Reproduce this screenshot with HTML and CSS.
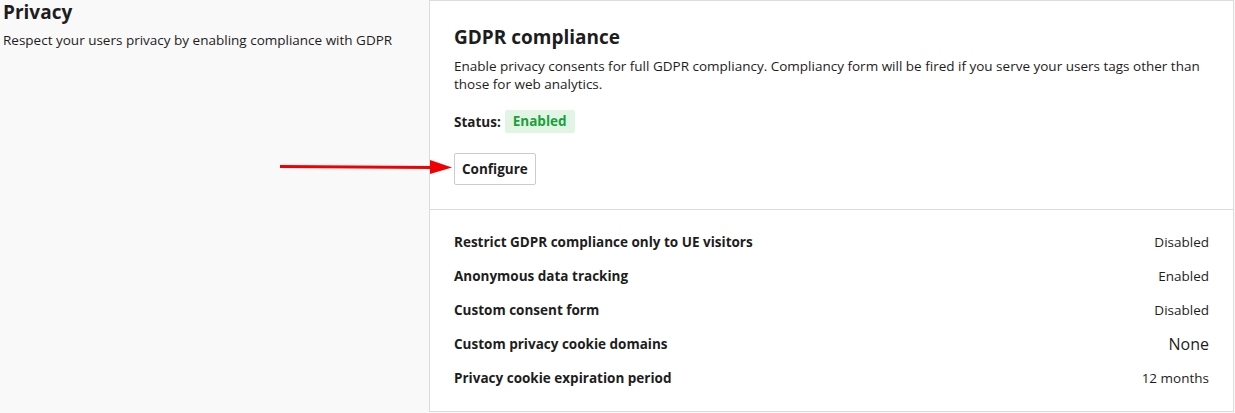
FILE: index.html
```html
<!DOCTYPE html>
<html lang="en">
<head>
<meta charset="utf-8">
<title>Privacy</title>
<link rel="stylesheet" href="styles.css">
</head>
<body>
<div class="page">
  <aside class="intro">
    <h2 class="intro-title">Privacy</h2>
    <p class="intro-text">Respect your users privacy by enabling compliance with GDPR</p>
    <div class="arrow-row">
      <svg class="arrow" width="172" height="16" viewBox="0 0 172 16">
        <line x1="0" y1="7.5" x2="152" y2="8.5" stroke="#f00000" stroke-width="3"/>
        <polygon points="150,1 172,8.5 150,15" fill="#f00000"/>
      </svg>
    </div>
  </aside>
  <section class="card">
    <div class="card-head">
      <h3 class="card-title">GDPR compliance</h3>
      <p class="card-desc">Enable privacy consents for full GDPR compliancy. Compliancy form will be fired if you serve your users tags other than those for web analytics.</p>
      <div class="status">
        <span class="status-label">Status:</span>
        <span class="badge">Enabled</span>
      </div>
      <button class="btn">Configure</button>
    </div>
    <div class="card-body">
      <div class="row"><span class="row-label">Restrict GDPR compliance only to UE visitors</span><span class="row-value">Disabled</span></div>
      <div class="row"><span class="row-label">Anonymous data tracking</span><span class="row-value">Enabled</span></div>
      <div class="row"><span class="row-label">Custom consent form</span><span class="row-value">Disabled</span></div>
      <div class="row"><span class="row-label">Custom privacy cookie domains</span><span class="row-value row-value-lg">None</span></div>
      <div class="row"><span class="row-label">Privacy cookie expiration period</span><span class="row-value">12 months</span></div>
    </div>
  </section>
</div>
</body>
</html>
```
FILE: styles.css
```css
* { box-sizing: border-box; }
html, body {
  margin: 0;
  background: #f9f9f9;
  font-family: "Open Sans", "Noto Sans", sans-serif;
  color: #1d1d1d;
}
.page {
  display: flex;
  align-items: flex-start;
}
.intro {
  width: 429px;
  padding-left: 3px;
  flex: none;
  position: relative;
}
.intro-title {
  margin: 0;
  font-size: 19px;
  line-height: 24px;
  font-weight: 700;
}
.intro-text {
  margin: 6px 0 0;
  font-size: 13.5px;
  line-height: 20px;
}
.arrow-row {
  position: absolute;
  left: 280px;
  top: 159px;
}
.arrow { display: block; }
.card {
  width: 805px;
  flex: none;
  background: #fff;
  border: 1px solid #dcdcdc;
}
.card-head {
  padding: 24px 24px 24px;
  border-bottom: 1px solid #dcdcdc;
}
.card-title {
  margin: 0;
  font-size: 19px;
  line-height: 24px;
  font-weight: 700;
}
.card-desc {
  margin: 8px 0 0;
  font-size: 13.5px;
  line-height: 18px;
}
.status {
  display: flex;
  align-items: center;
  gap: 4px;
  margin-top: 17px;
}
.status-label {
  font-size: 13.5px;
  font-weight: 700;
}
.badge {
  background: #e2f5e5;
  color: #17a03b;
  font-weight: 700;
  font-size: 13.5px;
  line-height: 23px;
  padding: 0 8px;
  border-radius: 2px;
}
.btn {
  margin-top: 20px;
  display: block;
  font-family: inherit;
  font-size: 13.5px;
  font-weight: 700;
  color: #1d1d1d;
  background: #fff;
  border: 1px solid #cccccc;
  border-radius: 2px;
  height: 32px;
  padding: 0 7px;
}
.card-body {
  padding: 15px 24px 16px;
  display: flex;
  flex-direction: column;
}
.row {
  display: flex;
  justify-content: space-between;
  align-items: center;
  height: 34px;
}
.row-label {
  font-size: 13.5px;
  font-weight: 700;
}
.row-value {
  font-size: 13.5px;
}
.row-value-lg {
  font-size: 16px;
}
```
